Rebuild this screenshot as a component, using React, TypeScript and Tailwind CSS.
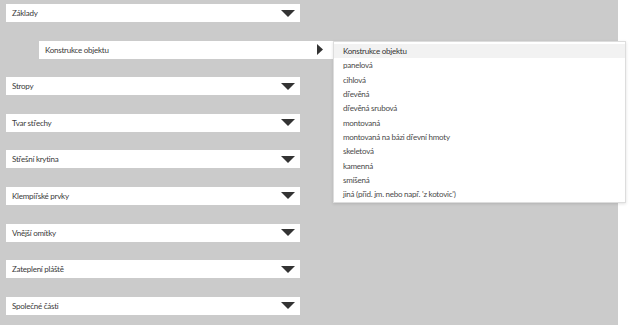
import React from 'react'

const sections = [
  'Základy',
  'Konstrukce objektu',
  'Stropy',
  'Tvar střechy',
  'Střešní krytina',
  'Klempířské prvky',
  'Vnější omítky',
  'Zateplení pláště',
  'Společné části',
]

const options = [
  'Konstrukce objektu',
  'panelová',
  'cihlová',
  'dřevěná',
  'dřevěná srubová',
  'montovaná',
  'montovaná na bázi dřevní hmoty',
  'skeletová',
  'kamenná',
  'smíšená',
  "jiná (přid. jm. nebo např. 'z kotovic')",
]

function CaretDown() {
  return (
    <svg width="14" height="7" viewBox="0 0 14 7" className="shrink-0">
      <path d="M0 0 L14 0 L7 7 Z" fill="#333333" />
    </svg>
  )
}

function CaretRight() {
  return (
    <svg width="6" height="11" viewBox="0 0 6 11" className="shrink-0">
      <path d="M0 0 L6 5.5 L0 11 Z" fill="#333333" />
    </svg>
  )
}

export default function App() {
  return (
    <div
      className="relative flex h-[325px] w-[640px] overflow-hidden bg-white"
      style={{ fontFamily: 'Lato, "Open Sans", sans-serif' }}
    >
      {/* Left form column */}
      <div className="flex h-full w-[618px] flex-col gap-[18.6px] bg-[#cbcbcb] pt-[4px]">
        {sections.map((name, i) =>
          i === 1 ? (
            <div
              key={name}
              className="ml-[39px] flex h-[18px] w-[294px] items-center justify-between bg-white pl-[6px] pr-[10px] text-[8px] tracking-[-0.25px] text-[#3a3a3a]"
            >
              <span>{name}</span>
              <CaretRight />
            </div>
          ) : (
            <div
              key={name}
              className="ml-[6px] flex h-[18px] w-[294px] items-center justify-between bg-white pl-[6px] pr-[5px] text-[8px] tracking-[-0.25px] text-[#3a3a3a]"
            >
              <span>{name}</span>
              <CaretDown />
            </div>
          )
        )}
      </div>

      {/* Open dropdown */}
      <div className="absolute left-[333px] top-[41px] w-[293px] border border-[#dddddd] bg-white pb-[1px] pt-[2px] shadow-[0_1px_3px_rgba(0,0,0,0.12)]">
        {options.map((opt, i) => (
          <div
            key={opt}
            className={
              i === 0
                ? 'flex h-[14.3px] items-center bg-[#f2f2f2] pl-[9px] text-[8px] tracking-[-0.25px] text-[#333]'
                : 'flex h-[14.3px] items-center pl-[9px] text-[8px] tracking-[-0.25px] text-[#4a4a4a]'
            }
          >
            {opt}
          </div>
        ))}
      </div>
    </div>
  )
}
